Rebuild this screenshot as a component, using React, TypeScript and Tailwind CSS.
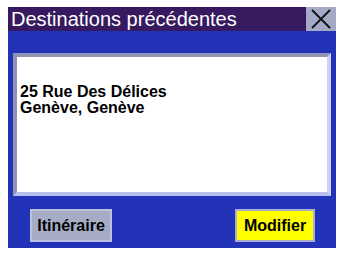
export default function App() {
  return (
    <div
      className="w-[339px] h-[254px] bg-white pt-[7px] pl-[8px] pr-[3px] pb-[6px]"
      style={{ fontFamily: '"Liberation Sans", Arial, sans-serif' }}
    >
      <div className="flex h-full flex-col">
        {/* title bar */}
        <div className="flex h-[24px] shrink-0 bg-[#36195e]">
          <div className="flex-1 pl-[3px] text-[20px] leading-[24px] text-white">
            Destinations précédentes
          </div>
          <div className="flex w-[30px] items-center justify-center bg-[#a4a9c6]">
            <svg width="22" height="22" viewBox="0 0 22 22">
              <path d="M2 2 L20 20 M20 2 L2 20" stroke="#111" strokeWidth="1.8" />
            </svg>
          </div>
        </div>

        {/* body */}
        <div className="flex flex-1 flex-col bg-[#2333b8] px-[5px] pt-[22px]">
          <div className="h-[143px] border-[4px] border-t-[#8c93b4] border-l-[#8c93b4] border-r-[#cdd3f5] border-b-[#b8c0ee] bg-white pl-[3px] pt-[27px]">
            <div className="text-[16px] font-bold leading-[16px] text-black">
              <div>25 Rue Des Délices</div>
              <div>Genève, Genève</div>
            </div>
          </div>

          <div className="mt-[13px] flex justify-between pl-[17px] pr-[16px]">
            <button className="h-[33px] w-[82px] border-2 border-[#bcc2dc] bg-[#a6acc6] text-[16px] font-bold text-black">
              Itinéraire
            </button>
            <button className="h-[33px] w-[80px] border-2 border-[#a8aed0] bg-[#ffff00] text-[16px] font-bold text-black">
              Modifier
            </button>
          </div>
        </div>
      </div>
    </div>
  );
}
